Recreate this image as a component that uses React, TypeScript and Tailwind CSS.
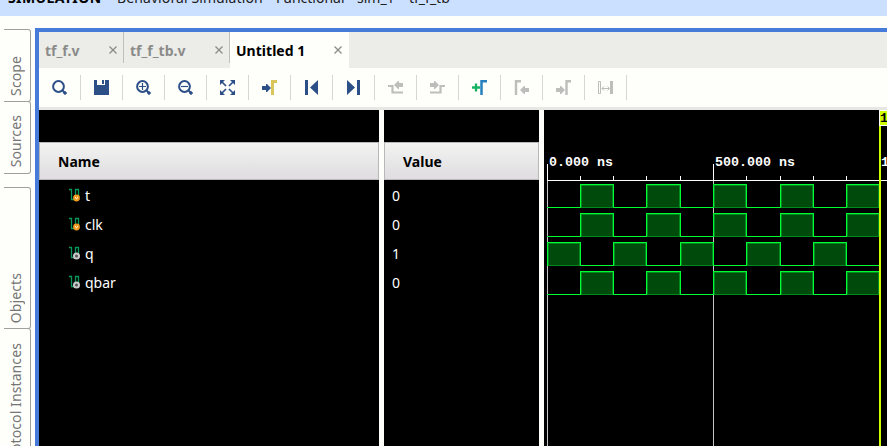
import React from "react";

const BLUE = "#2c4f87";
const GREY = "#bdbdbb";

const Arrow = ({ x, y, flip, color }: { x: number; y: number; flip?: boolean; color: string }) => (
  <path
    fill={color}
    transform={`translate(${x} ${y})` + (flip ? " translate(8 0) scale(-1 1)" : "")}
    d="M0 2h4V0h1l4 4-4 4H4V6H0z"
  />
);

const Lens = ({ children }: { children?: React.ReactNode }) => (
  <g fill="none" stroke={BLUE}>
    <circle cx="6.5" cy="6.5" r="5.4" strokeWidth="2" />
    <path d="M10.5 10.5l2 2" strokeWidth="2" />
    <circle cx="13" cy="13" r="1.3" fill={BLUE} strokeWidth="1" />
    {children}
  </g>
);

const tools: React.ReactNode[] = [
  <Lens />,
  <path fill={BLUE} fillRule="evenodd" d="M0 0h3v5h8V0h4v15H0zM8 0h2v4H8z" />,
  <Lens><path d="M3 6.5h7M6.5 3v7" strokeWidth="1.2" /></Lens>,
  <Lens><path d="M3 6.5h7" strokeWidth="1.2" /></Lens>,
  <g fill={BLUE} stroke={BLUE} strokeWidth="2">
    <path stroke="none" d="M0 0h5L0 5zM10 0h5v5zM0 10v5h5zM15 10v5h-5z" />
    <path d="M2 2l4 4M13 2L9 6M2 13l4-4M13 13L9 9" strokeWidth="1.7" />
  </g>,
  <g><Arrow x={0} y={4} color={BLUE} /><path d="M10.5 15V1.5H15" fill="none" stroke="#d8c65c" strokeWidth="3" /></g>,
  <path fill={BLUE} d="M1 0h3v15H1zM14 0v15L6 7.5z" />,
  <path fill={BLUE} d="M1 0v15l8-7.5zM11 0h3v15h-3z" />,
  <g><Arrow x={7} y={1} flip color={GREY} /><path d="M0 6h4.5v6.5H15" fill="none" stroke={GREY} strokeWidth="2.2" /></g>,
  <g><Arrow x={0} y={1} color={GREY} /><path d="M0 12.5h10.5V6H15" fill="none" stroke={GREY} strokeWidth="2.2" /></g>,
  <g><path d="M0 7.5h8M4 3.5v8" stroke="#16b362" strokeWidth="2.3" /><path d="M9.5 15V1.2H15" fill="none" stroke="#2680bd" strokeWidth="2.5" /></g>,
  <g><path d="M2 15V1.2h5" fill="none" stroke={GREY} strokeWidth="2.4" /><Arrow x={7} y={6} flip color={GREY} /></g>,
  <g><Arrow x={0} y={6} color={GREY} /><path d="M10.5 15V1.2H15" fill="none" stroke={GREY} strokeWidth="2.4" /></g>,
  <g fill="none" stroke={GREY}>
    <path d="M.5 1.5h2v12h-2z" />
    <path d="M13.5 1v13" strokeWidth="3" />
    <path d="M4 8.5h7M6 6.5l-2 2 2 2M9.5 6.5l2 2-2 2" />
  </g>,
];

const Close = () => (
  <svg width="8" height="8" viewBox="0 0 8 8" className="shrink-0">
    <path d="M.5.5l7 7M7.5.5l-7 7" stroke="#8b8b89" strokeWidth="1.3" />
  </svg>
);

const Tab = ({ label, box, active }: { label: string; box: string; active?: boolean }) => (
  <div className={`flex h-9 shrink-0 items-center justify-between ${box} ${active ? "bg-[#fefffb] text-black" : "text-[#8b8b89]"}`}>
    <span className="pt-px text-[14px] leading-5 font-bold tracking-[0.03px] whitespace-pre">{label}</span>
    <Close />
  </div>
);

const SideTab = ({ label, box }: { label: string; box: string }) => (
  <div className={`flex w-[27px] shrink-0 items-end rounded-r-[3px] border border-l-0 border-[#a0a09e] pl-[2px] ${box}`}>
    <span className="rotate-180 text-[14px] leading-[20px] tracking-[0.1px] whitespace-nowrap text-[#757575] [writing-mode:vertical-rl]">{label}</span>
  </div>
);

const signals = [
  { name: "t", value: "0", reg: true },
  { name: "clk", value: "0", reg: true },
  { name: "q", value: "1", reg: false },
  { name: "qbar", value: "0", reg: false },
];

const SignalIcon = ({ reg }: { reg: boolean }) => (
  <svg width="12" height="14" viewBox="0 0 12 14" className="-mt-px">
    <path d="M0 1.5h2.5v10H6M6.5 8V1.5h3V8" fill="none" stroke="#08965a" strokeWidth="1.3" />
    {reg ? (
      <g>
        <circle cx="7.5" cy="10" r="3.4" fill="#f39a1e" />
        <path d="M6.1 8.8l1.4 2.4 1.4-2.4" fill="none" stroke="#fff3d4" strokeWidth=".9" />
      </g>
    ) : (
      <circle cx="7.5" cy="10" r="2.5" fill="#555" stroke="#c9c9c9" strokeWidth="2" />
    )}
  </svg>
);

const Head = ({ label, pad }: { label: string; pad: string }) => (
  <div className={`mt-8 flex h-[38px] items-center border border-[#b9b9b9] bg-linear-to-b from-[#f3f3f2] to-[#dfdddf] text-[14px] font-bold text-black ${pad}`}>
    {label}
  </div>
);

const edges = [3, 36, 69, 102, 136, 169, 202, 236, 269, 302, 335];

const Waves = () => (
  <svg width="343" height="336" viewBox="0 0 343 336" shapeRendering="crispEdges">
    <path d="M3.5 71v265M169.5 71v265" stroke="#c4c4c4" />
    <path d="M3 70.5h340M3.5 54v17M169.5 54v17" stroke="#fff" />
    {edges.map((x) => <path key={x} d={`M${x + 0.5} 66v4`} stroke="#fff" />)}
    {signals.map((s, row) => {
      const y = 74 + row * 29;
      const phase = s.name === "q" ? 0 : 1;
      return (
        <g key={s.name}>
          {edges.slice(0, -1).map((x, i) => {
            const end = edges[i + 1];
            if (i % 2 !== phase) return <path key={x} d={`M${x} ${y + 23.5}H${end + 1}`} stroke="#00ff32" />;
            return (
              <g key={x}>
                <rect x={x + 1} y={y + 1} width={end - x - 1} height="23" fill="#004b0c" />
                <path d={`M${x + 1.5} ${y + 24}V${y + 1.5}H${end - 0.5}V${y + 23.5}H${x + 1}`} fill="none" stroke="#008a1d" />
                <path d={`M${x + 0.5} ${y + 24}V${y + 0.5}H${end + 0.5}V${y + 24}`} fill="none" stroke="#00ff32" />
              </g>
            );
          })}
        </g>
      );
    })}
    <g fill="#fff" fontFamily="'Liberation Mono', monospace" fontSize="13.33" fontWeight="700" xmlSpace="preserve">
      <text x="5" y="56">0.000 ns</text>
      <text x="171" y="56">500.000 ns</text>
      <text x="337" y="56">1</text>
    </g>
    <rect x="335" y="0" width="2" height="336" fill="#ceff00" />
    <path d="M335 .5h8M335.5 0v15.5h7.5" fill="none" stroke="#fff" />
    <rect x="336" y="1" width="7" height="14" fill="#ceff00" />
    <text x="336" y="12" fontFamily="'Liberation Mono', monospace" fontSize="13.33" fontWeight="700">1</text>
  </svg>
);

export default function App() {
  return (
    <div className="flex h-[446px] w-[887px] flex-col overflow-hidden bg-[#fefffb] font-['Noto_Sans','Open_Sans',sans-serif]">
      <header className="h-4 shrink-0 overflow-hidden bg-[#cbdffe]">
        <div className="-mt-[12px] flex pl-2 text-[14px] leading-5 whitespace-nowrap text-[#202020]">
          <b className="w-[109px] shrink-0 tracking-[0.4px] text-black">SIMULATION</b>
          <span className="w-[159px] shrink-0 tracking-[0.1px]">Behavioral Simulation</span>
          <span className="w-[81px] shrink-0">Functional</span>
          <span className="w-[52px] shrink-0">sim_1</span>
          <span>tf_f_tb</span>
        </div>
      </header>
      <div className="flex min-h-0 grow">
        <aside className="flex w-[35px] shrink-0 flex-col pt-[13px] pl-1">
          <SideTab label="Scope" box="h-[73px] pb-[5px]" />
          <SideTab label="Sources" box="-mt-px h-[73px] pb-[6px]" />
          <SideTab label="Objects" box="mt-[13px] h-[142px] pb-[5px]" />
          <SideTab label="Protocol Instances" box="-mt-px h-[144px] pb-[5px]" />
        </aside>
        <main className="mt-3 flex grow flex-col border-t-4 border-l-4 border-[#467bd9]">
          <div className="flex h-9 shrink-0 bg-[#ecede9]">
            <Tab label="tf_f.v" box="w-[84px] pl-[6px] pr-[6px]" />
            <div className="h-[31px] w-px bg-[#bfc0bd]" />
            <Tab label="tf_f_tb.v" box="w-[105px] pl-[6px] pr-[6px]" />
            <div className="h-[31px] w-px bg-[#bfc0bd]" />
            <Tab label="Untitled 1" box="w-[119px] pl-[6px] pr-[7px]" active />
          </div>
          <div className="flex h-[39px] shrink-0 items-center">
            {tools.map((icon, i) => (
              <div key={i} className="flex h-[25px] w-[42px] shrink-0 items-center border-r border-[#d6d7d4] pl-[13px]">
                <svg width="15" height="15" viewBox="0 0 15 15" className="overflow-visible">{icon}</svg>
              </div>
            ))}
          </div>
          <div className="h-[3px] shrink-0 bg-[#e7e8e4]" />
          <div className="flex min-h-0 grow gap-[5px]">
            <section className="w-[340px] shrink-0 bg-black">
              <Head label="Name" pad="pl-[18px]" />
              <div className="pt-px">
                {signals.map((s) => (
                  <div key={s.name} className="flex h-[29px] items-center pl-[30px] text-[14px] text-white">
                    <SignalIcon reg={s.reg} />
                    <span className="ml-[4px]">{s.name}</span>
                  </div>
                ))}
              </div>
            </section>
            <section className="w-[155px] shrink-0 bg-black">
              <Head label="Value" pad="pl-[18px]" />
              <div className="pt-px">
                {signals.map((s) => (
                  <div key={s.name} className="flex h-[29px] items-center pl-2 text-[14px] text-white">{s.value}</div>
                ))}
              </div>
            </section>
            <section className="w-[343px] shrink-0 bg-black"><Waves /></section>
          </div>
        </main>
      </div>
    </div>
  );
}
